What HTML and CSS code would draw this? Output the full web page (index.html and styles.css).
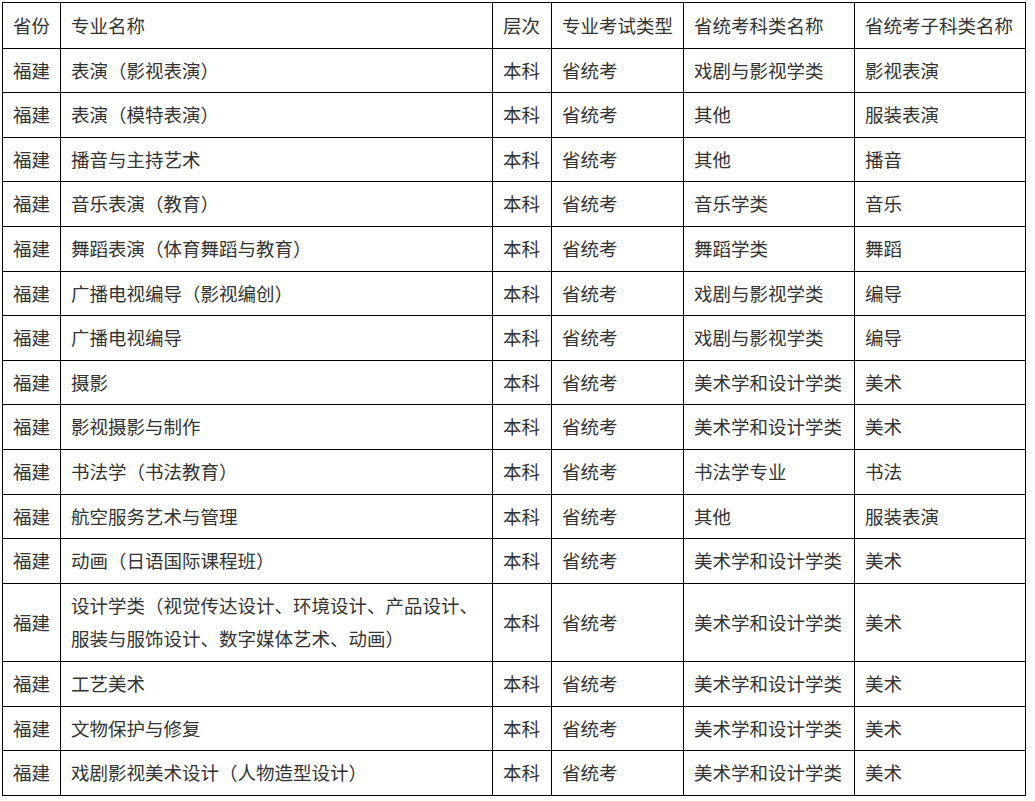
FILE: index.html
```html
<!DOCTYPE html>
<html lang="zh-CN">
<head>
<meta charset="utf-8">
<title>福建 专业列表</title>
<link rel="stylesheet" href="styles.css">
</head>
<body>
<table class="majors">
  <colgroup>
    <col class="c-prov">
    <col class="c-name">
    <col class="c-level">
    <col class="c-type">
    <col class="c-cat">
    <col class="c-sub">
  </colgroup>
  <thead>
    <tr><th>省份</th><th>专业名称</th><th>层次</th><th>专业考试类型</th><th>省统考科类名称</th><th>省统考子科类名称</th></tr>
  </thead>
  <tbody>
    <tr><td>福建</td><td>表演（影视表演）</td><td>本科</td><td>省统考</td><td>戏剧与影视学类</td><td>影视表演</td></tr>
    <tr><td>福建</td><td>表演（模特表演）</td><td>本科</td><td>省统考</td><td>其他</td><td>服装表演</td></tr>
    <tr><td>福建</td><td>播音与主持艺术</td><td>本科</td><td>省统考</td><td>其他</td><td>播音</td></tr>
    <tr><td>福建</td><td>音乐表演（教育）</td><td>本科</td><td>省统考</td><td>音乐学类</td><td>音乐</td></tr>
    <tr><td>福建</td><td>舞蹈表演（体育舞蹈与教育）</td><td>本科</td><td>省统考</td><td>舞蹈学类</td><td>舞蹈</td></tr>
    <tr><td>福建</td><td>广播电视编导（影视编创）</td><td>本科</td><td>省统考</td><td>戏剧与影视学类</td><td>编导</td></tr>
    <tr><td>福建</td><td>广播电视编导</td><td>本科</td><td>省统考</td><td>戏剧与影视学类</td><td>编导</td></tr>
    <tr><td>福建</td><td>摄影</td><td>本科</td><td>省统考</td><td>美术学和设计学类</td><td>美术</td></tr>
    <tr><td>福建</td><td>影视摄影与制作</td><td>本科</td><td>省统考</td><td>美术学和设计学类</td><td>美术</td></tr>
    <tr><td>福建</td><td>书法学（书法教育）</td><td>本科</td><td>省统考</td><td>书法学专业</td><td>书法</td></tr>
    <tr><td>福建</td><td>航空服务艺术与管理</td><td>本科</td><td>省统考</td><td>其他</td><td>服装表演</td></tr>
    <tr><td>福建</td><td>动画（日语国际课程班）</td><td>本科</td><td>省统考</td><td>美术学和设计学类</td><td>美术</td></tr>
    <tr><td>福建</td><td>设计学类（视觉传达设计、环境设计、产品设计、服装与服饰设计、数字媒体艺术、动画）</td><td>本科</td><td>省统考</td><td>美术学和设计学类</td><td>美术</td></tr>
    <tr><td>福建</td><td>工艺美术</td><td>本科</td><td>省统考</td><td>美术学和设计学类</td><td>美术</td></tr>
    <tr><td>福建</td><td>文物保护与修复</td><td>本科</td><td>省统考</td><td>美术学和设计学类</td><td>美术</td></tr>
    <tr><td>福建</td><td>戏剧影视美术设计（人物造型设计）</td><td>本科</td><td>省统考</td><td>美术学和设计学类</td><td>美术</td></tr>
  </tbody>
</table>
</body>
</html>
```

FILE: styles.css
```css
html, body {
  margin: 0;
  padding: 0;
  background: #ffffff;
}

body {
  padding: 2px 0 0 2px;
  font-family: "Noto Sans CJK SC", "Noto Sans", sans-serif;
  font-size: 18.5px;
  color: #333333;
}

.majors {
  border-collapse: collapse;
  table-layout: fixed;
  width: 1024px;
}

.c-prov { width: 58px; }
.c-name { width: 432px; }
.c-level { width: 59px; }
.c-type { width: 132px; }
.c-cat { width: 171px; }
.c-sub { width: 171px; }

.majors th,
.majors td {
  border: 1px solid #000000;
  padding: 5px 9px 5px 10px;
  line-height: 33.6px;
  text-align: left;
  vertical-align: middle;
  font-weight: normal;
  white-space: normal;
}

.majors th {
  padding-top: 5.5px;
  padding-bottom: 5.5px;
}
```
